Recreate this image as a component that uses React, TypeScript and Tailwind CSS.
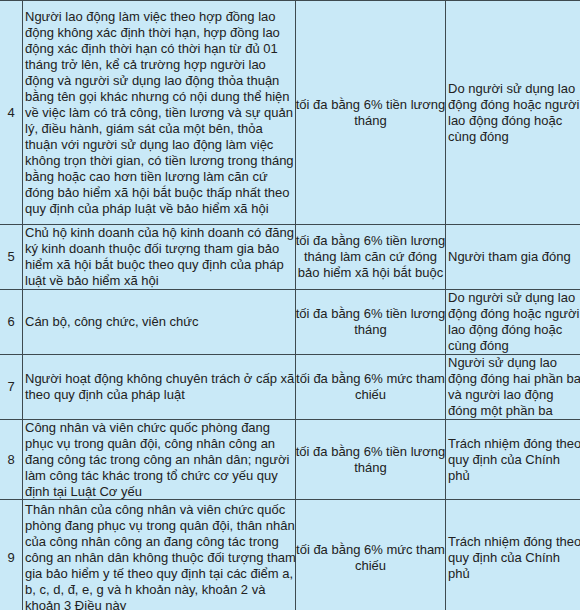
import React from "react";

type Row = {
  no: string;
  h: string;
  subject: string[];
  rate: string[];
  payer: string[];
};

const rows: Row[] = [
  {
    no: "4",
    h: "h-[225px] border-t",
    subject: [
      "Người lao động làm việc theo hợp đồng lao",
      "động không xác định thời hạn, hợp đồng lao",
      "động xác định thời hạn có thời hạn từ đủ 01",
      "tháng trở lên, kể cả trường hợp người lao",
      "động và người sử dụng lao động thỏa thuận",
      "bằng tên gọi khác nhưng có nội dung thể hiện",
      "về việc làm có trả công, tiền lương và sự quản",
      "lý, điều hành, giám sát của một bên, thỏa",
      "thuận với người sử dụng lao động làm việc",
      "không trọn thời gian, có tiền lương trong tháng",
      "bằng hoặc cao hơn tiền lương làm căn cứ",
      "đóng bảo hiểm xã hội bắt buộc thấp nhất theo",
      "quy định của pháp luật về bảo hiểm xã hội",
    ],
    rate: ["tối đa bằng 6% tiền lương", "tháng"],
    payer: [
      "Do người sử dụng lao",
      "động đóng hoặc người",
      "lao động đóng hoặc",
      "cùng đóng",
    ],
  },
  {
    no: "5",
    h: "h-[65px]",
    subject: [
      "Chủ hộ kinh doanh của hộ kinh doanh có đăng",
      "ký kinh doanh thuộc đối tượng tham gia bảo",
      "hiểm xã hội bắt buộc theo quy định của pháp",
      "luật về bảo hiểm xã hội",
    ],
    rate: [
      "tối đa bằng 6% tiền lương",
      "tháng làm căn cứ đóng",
      "bảo hiểm xã hội bắt buộc",
    ],
    payer: ["Người tham gia đóng"],
  },
  {
    no: "6",
    h: "h-[65px]",
    subject: ["Cán bộ, công chức, viên chức"],
    rate: ["tối đa bằng 6% tiền lương", "tháng"],
    payer: [
      "Do người sử dụng lao",
      "động đóng hoặc người",
      "lao động đóng hoặc",
      "cùng đóng",
    ],
  },
  {
    no: "7",
    h: "h-[65px]",
    subject: [
      "Người hoạt động không chuyên trách ở cấp xã",
      "theo quy định của pháp luật",
    ],
    rate: ["tối đa bằng 6% mức tham", "chiếu"],
    payer: [
      "Người sử dụng lao",
      "động đóng hai phần ba",
      "và người lao động",
      "đóng một phần ba",
    ],
  },
  {
    no: "8",
    h: "h-[80px]",
    subject: [
      "Công nhân và viên chức quốc phòng đang",
      "phục vụ trong quân đội, công nhân công an",
      "đang công tác trong công an nhân dân; người",
      "làm công tác khác trong tổ chức cơ yếu quy",
      "định tại Luật Cơ yếu",
    ],
    rate: ["tối đa bằng 6% tiền lương", "tháng"],
    payer: ["Trách nhiệm đóng theo", "quy định của Chính", "phủ"],
  },
  {
    no: "9",
    h: "h-[116px]",
    subject: [
      "Thân nhân của công nhân và viên chức quốc",
      "phòng đang phục vụ trong quân đội, thân nhân",
      "của công nhân công an đang công tác trong",
      "công an nhân dân không thuộc đối tượng tham",
      "gia bảo hiểm y tế theo quy định tại các điểm a,",
      "b, c, d, đ, e, g và h khoản này, khoản 2 và",
      "khoản 3 Điều này",
    ],
    rate: ["tối đa bằng 6% mức tham", "chiếu"],
    payer: ["Trách nhiệm đóng theo", "quy định của Chính", "phủ"],
  },
];

function Lines({ lines }: { lines: string[] }) {
  return (
    <div>
      {lines.map((l, i) => (
        <div key={i} className="whitespace-nowrap">
          {l}
        </div>
      ))}
    </div>
  );
}

export default function App() {
  return (
    <div className="w-[580px] h-[610px] overflow-hidden bg-[#c9e9f7] text-[#222] text-[13px] leading-[16px] font-['Liberation_Sans',Arial,sans-serif]">
      <div className="grid grid-cols-[23px_273px_150px_200px] w-[646px]">
        {rows.map((r) => (
          <React.Fragment key={r.no}>
            <div className={`${r.h} border-b border-r border-[#3e4a50] flex items-center justify-center`}>
              {r.no}
            </div>
            <div className={`${r.h} border-b border-r border-[#3e4a50] flex items-center pl-[2px]`}>
              <Lines lines={r.subject} />
            </div>
            <div className={`${r.h} border-b border-r border-[#3e4a50] flex items-center justify-center text-center`}>
              <Lines lines={r.rate} />
            </div>
            <div className={`${r.h} border-b border-r border-[#3e4a50] flex items-center pl-[2px]`}>
              <Lines lines={r.payer} />
            </div>
          </React.Fragment>
        ))}
      </div>
    </div>
  );
}
